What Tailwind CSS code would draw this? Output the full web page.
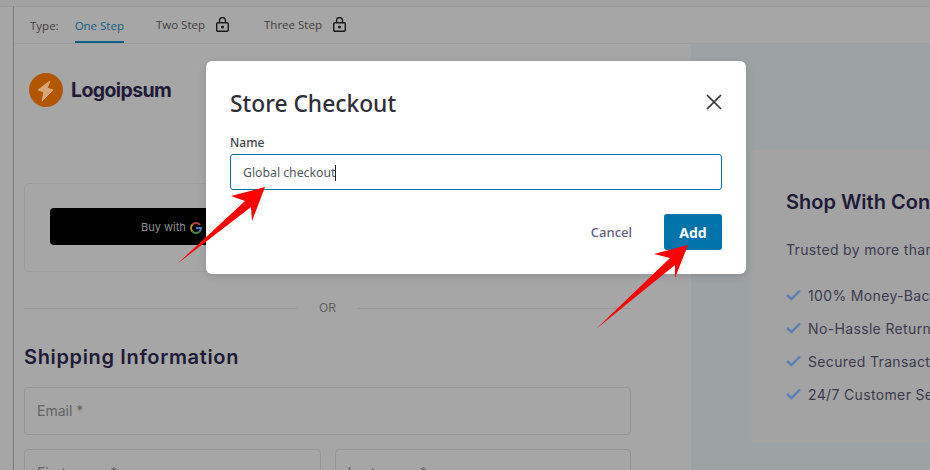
<!DOCTYPE html>
<html lang="en">
<head>
  <meta charset="UTF-8" />
  <title>Store Checkout</title>
  <script src="https://cdn.jsdelivr.net/npm/@tailwindcss/browser@4"></script>
</head>
<body class="bg-[#a6a6a6]">
  <div class="relative w-[930px] h-[470px] overflow-hidden flex flex-col font-['Inter',sans-serif]">
    <div class="h-[7px] bg-[#a2a2a2] border-b border-[#989898] shrink-0"></div>
    <div class="flex flex-1 min-h-0">
      <div class="w-[14px] shrink-0 border-r border-[#7c7c7c]"></div>
      <div class="flex-1 min-w-0 flex flex-col">
        <!-- tabs -->
        <div class="h-[37px] shrink-0 flex border-b border-[#9e9e9e] pl-[16px] text-[11.5px] font-['Open_Sans',sans-serif] text-[#3f3f3f]">
          <span class="mt-[10px]">Type:</span>
          <span class="ml-[16px] h-full pt-[10px] border-b-2 border-[#0f5f82] text-[#0f5f82]">One Step</span>
          <span class="ml-[32px] mt-[9px]">Two Step</span>
          <svg class="ml-[11px] mt-[10px] shrink-0" width="13" height="15" viewBox="0 0 13 15" fill="none" stroke="#1a1a1a" stroke-width="1.4"><rect x="0.7" y="5.7" width="11.6" height="8.6" rx="1.2"/><path d="M3.500 5.700V3.500a3 3 0 0 1 6 0v2.200"/><circle cx="6.500" cy="10" r="0.8" fill="#1a1a1a"/></svg>
          <span class="ml-[35px] mt-[9px]">Three Step</span>
          <svg class="ml-[11px] mt-[10px] shrink-0" width="13" height="15" viewBox="0 0 13 15" fill="none" stroke="#1a1a1a" stroke-width="1.4"><rect x="0.7" y="5.7" width="11.6" height="8.6" rx="1.2"/><path d="M3.500 5.700V3.500a3 3 0 0 1 6 0v2.200"/><circle cx="6.500" cy="10" r="0.8" fill="#1a1a1a"/></svg>
        </div>
        <div class="flex flex-1 min-h-0">
          <!-- checkout form -->
          <div class="w-[677px] shrink-0 pl-[10px] pr-[60px]">
            <div class="flex items-center gap-[8px] mt-[28px] ml-[5px] h-[35px]">
              <svg class="shrink-0" width="34" height="34" viewBox="0 0 34 34"><circle cx="17" cy="17" r="17" fill="#b35600"/><path d="M21 8 9 17l6 2-2 9 11-11-6-2z" fill="#d9a679" stroke="#d9a679" stroke-linejoin="round"/></svg>
              <span class="pt-[2px] text-[19.5px] font-bold tracking-[-0.6px] text-[#1f1a38]">Logoipsum</span>
            </div>
            <div class="mt-[76px] h-[89px] border border-[#9c9c9c] rounded-[5px] pl-[25px] pt-[24px]">
              <div class="w-full h-[37px] bg-black rounded-[4px] flex items-center pl-[91px] pt-[2px] gap-[4px] text-[11px] text-[#8f8f8f]">
                Buy with
                <svg class="shrink-0" width="12" height="12" viewBox="0 0 12 12" fill="none" stroke-width="2"><path d="M10 3a5 5 0 0 0-7.500-.5" stroke="#b04a3e"/><path d="M2.500 2.500a5 5 0 0 0 0 7" stroke="#b8962e"/><path d="M2.500 9.500a5 5 0 0 0 7 0" stroke="#3f8f4f"/><path d="M9.500 9.500A5 5 0 0 0 11 6H6" stroke="#4a78c0"/></svg>
              </div>
            </div>
            <div class="mt-[27px] flex items-center gap-[22px] text-[12px] text-[#5f5f5f]">
              <div class="flex-1 h-[1px] bg-[#999999]"></div>
              <span>OR</span>
              <div class="flex-1 h-[1px] bg-[#999999]"></div>
            </div>
            <h2 class="mt-[26px] text-[20px] font-semibold tracking-[0.65px] text-[#1f1a38] leading-[28px]">Shipping Information</h2>
            <div class="mt-[16px] h-[48px] border border-[#969696] rounded-[4px] px-[12px] pb-[2px] flex items-center text-[14px] text-[#636363]">Email *</div>
            <div class="mt-[14px] flex gap-[14px]">
              <div class="flex-1 h-[48px] border border-[#969696] rounded-[4px] px-[12px] pb-[2px] flex items-center text-[14px] text-[#636363]">First name *</div>
              <div class="flex-1 h-[48px] border border-[#969696] rounded-[4px] px-[12px] pb-[2px] flex items-center text-[14px] text-[#636363]">Last name *</div>
            </div>
          </div>
          <!-- right side -->
          <div class="flex-1 min-w-0 bg-[#9da2a5] pl-[60px] pt-[107px]">
            <div class="h-[291px] bg-[#a3a3a3] pl-[35px] pt-[37px] whitespace-nowrap overflow-hidden">
              <h2 class="text-[20px] font-semibold text-[#1f1a38] leading-[28px]">Shop With Confidence</h2>
              <p class="mt-[23px] text-[14px] tracking-[0.35px] text-[#3c3a4e]">Trusted by more than</p>
              <ul class="mt-[25px] flex flex-col gap-[13px] text-[14px] tracking-[0.35px] text-[#3c3a4e]">
                <li class="flex items-center gap-[7px] h-[20px]"><svg class="shrink-0" width="15" height="12" viewBox="0 0 15 12" fill="none" stroke="#5b7fb5" stroke-width="2.400"><path d="M1 6l4.500 4L14 1.500"/></svg>100% Money-Back Guarantee</li>
                <li class="flex items-center gap-[7px] h-[20px]"><svg class="shrink-0" width="15" height="12" viewBox="0 0 15 12" fill="none" stroke="#5b7fb5" stroke-width="2.400"><path d="M1 6l4.500 4L14 1.500"/></svg>No-Hassle Returns</li>
                <li class="flex items-center gap-[7px] h-[20px]"><svg class="shrink-0" width="15" height="12" viewBox="0 0 15 12" fill="none" stroke="#5b7fb5" stroke-width="2.400"><path d="M1 6l4.500 4L14 1.500"/></svg>Secured Transactions</li>
                <li class="flex items-center gap-[7px] h-[20px]"><svg class="shrink-0" width="15" height="12" viewBox="0 0 15 12" fill="none" stroke="#5b7fb5" stroke-width="2.400"><path d="M1 6l4.500 4L14 1.500"/></svg>24/7 Customer Service</li>
              </ul>
            </div>
          </div>
        </div>
      </div>
    </div>

    <!-- modal -->
    <div class="absolute left-[206px] top-[61px] w-[540px] h-[213px] bg-white rounded-[6px] px-[24px] shadow-[0_2px_8px_rgba(0,0,0,0.12)] font-['Noto_Sans',sans-serif]">
      <div class="flex items-center justify-between mt-[24px] h-[34px]">
        <h1 class="pt-[4px] text-[22.8px] font-medium text-[#2e2e38]">Store Checkout</h1>
        <svg class="shrink-0" width="16" height="16" viewBox="0 0 16 16" fill="none" stroke="#333333" stroke-width="1.700"><path d="M1 1l14 14M15 1 1 15"/></svg>
      </div>
      <div class="mt-[15px] text-[12px] font-medium leading-[18px] text-[#444444]">Name</div>
      <div class="mt-[2px] h-[36px] border border-[#0073aa] rounded-[3px] pl-[12px] flex items-center text-[12.25px] pt-[2px] text-[#50575e]">Global checkout<span class="w-[1px] h-[16px] bg-[#222222]"></span></div>
      <div class="mt-[24px] flex items-center justify-end">
        <span class="text-[13px] font-medium text-[#5f5f82] pt-[1px]">Cancel</span>
        <button class="ml-[32px] w-[58px] h-[36px] bg-[#0073aa] rounded-[3px] text-[14px] font-bold text-white">Add</button>
      </div>
    </div>

    <!-- annotation arrows -->
    <svg class="absolute inset-0" width="930" height="470" viewBox="0 0 930 470">
      <path d="M177 264 245 201 231 196 265 187 252 221 251 207z" fill="#ff0000"/>
      <path d="M596 329 670 258 654 254 688 245 675 278 675 265z" fill="#ff0000"/>
    </svg>
  </div>
</body>
</html>
